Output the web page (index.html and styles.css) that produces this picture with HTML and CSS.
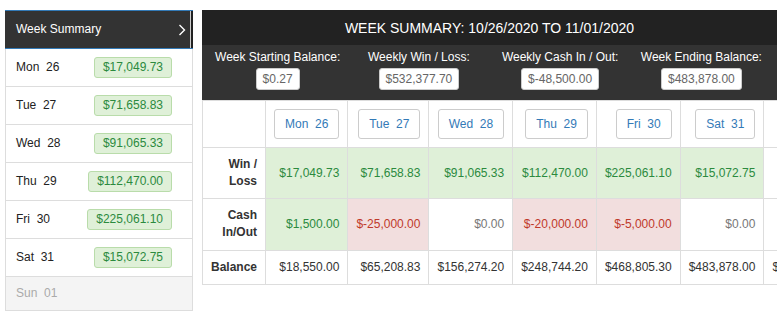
FILE: index.html
```html
<!DOCTYPE html>
<html lang="en">
  <head>
    <meta charset="UTF-8" />
    <meta name="viewport" content="width=device-width, initial-scale=1.0" />
    <title>Week Summary</title>
    <link rel="stylesheet" href="styles.css">
  </head>
  <body>
    <div class="page">
      <aside class="week-list">
        <div class="week-list-head">
          <span>Week Summary</span>
          <svg class="chevron" width="8" height="12" viewBox="0 0 8 12">
            <polyline points="1.5,1 6.5,6 1.5,11" fill="none" stroke="#fff" stroke-width="1.4" />
          </svg>
        </div>
        <div class="day-row"><span>Mon&nbsp; 26</span><span class="badge">$17,049.73</span></div>
        <div class="day-row"><span>Tue&nbsp; 27</span><span class="badge">$71,658.83</span></div>
        <div class="day-row"><span>Wed&nbsp; 28</span><span class="badge">$91,065.33</span></div>
        <div class="day-row"><span>Thu&nbsp; 29</span><span class="badge">$112,470.00</span></div>
        <div class="day-row"><span>Fri&nbsp; 30</span><span class="badge">$225,061.10</span></div>
        <div class="day-row"><span>Sat&nbsp; 31</span><span class="badge">$15,072.75</span></div>
        <div class="day-row off"><span>Sun&nbsp; 01</span></div>
      </aside>

      <section class="summary">
        <div class="summary-title">WEEK SUMMARY: 10/26/2020 TO 11/01/2020</div>
        <div class="summary-totals">
          <div class="total">
            <div class="total-label">Week Starting Balance:</div>
            <span class="total-value">$0.27</span>
          </div>
          <div class="total">
            <div class="total-label">Weekly Win / Loss:</div>
            <span class="total-value">$532,377.70</span>
          </div>
          <div class="total">
            <div class="total-label">Weekly Cash In / Out:</div>
            <span class="total-value">$-48,500.00</span>
          </div>
          <div class="total">
            <div class="total-label">Week Ending Balance:</div>
            <span class="total-value">$483,878.00</span>
          </div>
        </div>

        <div class="table-wrap">
          <table class="week-table">
            <tr>
              <th class="row-label"></th>
              <th><button>Mon&nbsp; 26</button></th>
              <th><button>Tue&nbsp; 27</button></th>
              <th><button>Wed&nbsp; 28</button></th>
              <th><button>Thu&nbsp; 29</button></th>
              <th><button>Fri&nbsp; 30</button></th>
              <th><button>Sat&nbsp; 31</button></th>
              <th></th>
            </tr>
            <tr>
              <th class="row-label">Win /<br>Loss</th>
              <td class="win">$17,049.73</td>
              <td class="win">$71,658.83</td>
              <td class="win">$91,065.33</td>
              <td class="win">$112,470.00</td>
              <td class="win">$225,061.10</td>
              <td class="win">$15,072.75</td>
              <td></td>
            </tr>
            <tr>
              <th class="row-label">Cash<br>In/Out</th>
              <td class="win">$1,500.00</td>
              <td class="loss">$-25,000.00</td>
              <td class="zero">$0.00</td>
              <td class="loss">$-20,000.00</td>
              <td class="loss">$-5,000.00</td>
              <td class="zero">$0.00</td>
              <td></td>
            </tr>
            <tr>
              <th class="row-label">Balance</th>
              <td>$18,550.00</td>
              <td>$65,208.83</td>
              <td>$156,274.20</td>
              <td>$248,744.20</td>
              <td>$468,805.30</td>
              <td>$483,878.00</td>
              <td>$483,878.00</td>
            </tr>
          </table>
        </div>
      </section>
    </div>
  </body>
</html>
```

FILE: styles.css
```css
body {
  margin: 0;
  font-family: "Liberation Sans", Arial, Helvetica, sans-serif;
  font-size: 12px;
  line-height: 1.42857;
  color: #333;
  background: #fff;
}
.page {
  display: flex;
  align-items: flex-start;
  padding: 10px 6px 0 5px;
}

/* left day list */
.week-list {
  width: 186px;
  flex: none;
  margin-right: 9px;
  border-left: 1px solid #ddd;
  border-right: 1px solid #ddd;
}
.week-list-head {
  display: flex;
  align-items: center;
  justify-content: space-between;
  margin: 0 -1px;
  padding: 10px 7px 10px 11px;
  background-color: #333;
  color: #fff;
  border-top: 1px solid #337ab7;
  border-bottom: 1px solid #337ab7;
  box-shadow: inset -2px 0 0 #222, inset -3px 0 0 #ccc;
}
.chevron {
  display: block;
}
.day-row {
  display: flex;
  align-items: center;
  justify-content: space-between;
  padding: 8px 20px 8px 10px;
  border-bottom: 1px solid #ddd;
  color: #222;
}
.day-row.off {
  background-color: #f4f4f4;
  color: #aaa;
}
.badge {
  padding: 1px 8px;
  line-height: 17px;
  border: 1px solid #b9dcaa;
  border-radius: 3px;
  background-color: #dff0d8;
  color: #2b8a3e;
}

/* right summary panel */
.summary {
  flex: 1;
  min-width: 0;
}
.summary-title {
  padding: 8px 0 7px;
  line-height: 20px;
  font-size: 14px;
  text-align: center;
  color: #fff;
  background-color: #222;
}
.summary-totals {
  display: grid;
  grid-template-columns: repeat(4, 1fr);
  padding: 4px 5px 10px;
  background-color: #333;
  text-align: center;
}
.total-label {
  color: #fff;
  line-height: 17px;
  margin-bottom: 2px;
}
.total-value {
  display: inline-block;
  padding: 2px 6px;
  line-height: 16px;
  border: 1px solid #ccc;
  border-radius: 3px;
  background-color: #fff;
  color: #666;
}
.table-wrap {
  overflow: hidden;
}
.week-table {
  border-collapse: collapse;
  background-color: #fff;
}
.week-table th,
.week-table td {
  width: 67px;
  padding: 8px;
  border: 1px solid #ddd;
  text-align: right;
  vertical-align: middle;
  white-space: nowrap;
  font-weight: normal;
}
.week-table .row-label {
  width: 47px;
  font-weight: bold;
  color: #333;
  white-space: normal;
}
.week-table button {
  padding: 5px 10px;
  font-family: inherit;
  font-size: 12px;
  line-height: 18px;
  color: #337ab7;
  background-color: #fff;
  border: 1px solid #ccc;
  border-radius: 3px;
  cursor: pointer;
}
.week-table .win {
  background-color: #dff0d8;
  color: #2b8a3e;
}
.week-table .loss {
  background-color: #f2dede;
  color: #c0392b;
}
.week-table .zero {
  color: #777;
}
```
